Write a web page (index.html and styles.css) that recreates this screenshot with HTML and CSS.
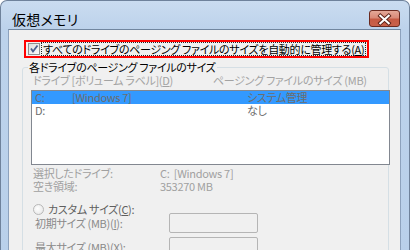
FILE: index.html
```html
<!DOCTYPE html>
<html lang="ja">
<head>
<meta charset="utf-8">
<title>仮想メモリ</title>
<link rel="stylesheet" href="styles.css">
</head>
<body>
<div class="window">
  <div class="titlebar">
    <span class="title">仮想メモリ</span>
    <span class="close">
      <svg width="31" height="17" viewBox="0 0 31 17">
        <path d="M11 4.5 L20 12.5 M20 4.5 L11 12.5" stroke="#5a2218" stroke-width="4.2" stroke-linecap="square" fill="none"/>
        <path d="M11 4.5 L20 12.5 M20 4.5 L11 12.5" stroke="#ffffff" stroke-width="2.2" stroke-linecap="square" fill="none"/>
      </svg>
    </span>
  </div>
  <div class="client">
    <div class="auto">
      <span class="checkbox">
        <svg width="12" height="12" viewBox="0 0 12 12">
          <path d="M3 5.5 L5 8.5 L9.5 2.5" stroke="#4a5f8f" stroke-width="1.8" fill="none"/>
        </svg>
      </span>
      <span class="auto-label">すべてのドライブのページング ファイルのサイズを自動的に管理する(<u>A</u>)</span>
    </div>
    <fieldset class="group">
      <legend>各ドライブのページング ファイルのサイズ</legend>
      <div class="cols">
        <span>ドライブ [ボリューム ラベル](<u>D</u>)</span>
        <span>ページング ファイルのサイズ (MB)</span>
      </div>
      <div class="listbox">
        <div class="row sel"><span>C:</span><span>[Windows 7]</span><span>システム管理</span></div>
        <div class="row"><span>D:</span><span></span><span>なし</span></div>
      </div>
      <div class="info">
        <span>選択したドライブ:</span><span>C:&nbsp;&nbsp;[Windows 7]</span>
        <span>空き領域:</span><span>353270 MB</span>
      </div>
      <div class="radio-row">
        <span class="radio"></span>
        <span class="radio-label">カスタム サイズ(<u>C</u>):</span>
      </div>
      <div class="size-row">
        <span class="size-label">初期サイズ (MB)(<u>I</u>):</span>
        <span class="textbox"></span>
      </div>
      <div class="size-row second">
        <span class="size-label">最大サイズ (MB)(<u>X</u>):</span>
        <span class="textbox"></span>
      </div>
    </fieldset>
  </div>
</div>
</body>
</html>
```
FILE: styles.css
```css
* { box-sizing: border-box; }

body {
  margin: 0;
  width: 410px;
  height: 250px;
  overflow: hidden;
  background: #ffffff;
  font-family: "Noto Sans CJK JP", "Liberation Sans", sans-serif;
  font-size: 11px;
  letter-spacing: -0.3px;
  font-feature-settings: "palt";
}

.window {
  width: 410px;
  height: 270px;
  border: 1px solid #6f829b;
  border-bottom: none;
  border-radius: 7px 7px 0 0;
  background: linear-gradient(#cadcf0, #bcd2eb 28px, #b9d0ea);
  padding: 0 8px 0 7px;
  display: flex;
  flex-direction: column;
}

.titlebar {
  height: 28px;
  display: flex;
  align-items: flex-start;
}

.title {
  margin: 10px 0 0 4px;
  font-size: 14px;
  line-height: 16px;
  color: #000;
  letter-spacing: 0.3px;
}

.close {
  margin: 9px 1px 0 auto;
  width: 31px;
  height: 17px;
  border: 1px solid #6b2a20;
  border-radius: 3px;
  background: linear-gradient(#e4a898, #d98a78 45%, #c65a43 55%, #c9614a);
  display: flex;
}

.client {
  flex: 1;
  background: #f0f0f0;
  border: 1px solid #8da2bd;
  border-top-color: #71869f;
  padding: 10px 0 0 13px;
}

.auto {
  display: flex;
  align-items: center;
  width: 345px;
  height: 18px;
  margin-left: 2px;
  padding-left: 2px;
  border: 2px solid #ff0000;
}

.checkbox {
  width: 12px;
  height: 12px;
  border: 1px solid #8e8f8f;
  background: linear-gradient(135deg, #dcdcdc, #fbfbfb);
  display: flex;
  align-items: center;
  justify-content: center;
}
.checkbox svg { margin: -1px; }

.auto-label {
  margin-left: 1px;
  padding: 0 1px;
  line-height: 12px;
  border: 1px dotted #222;
  color: #000;
  white-space: nowrap;
}

.group {
  width: 367px;
  margin: 3px 0 0 0;
  padding: 0;
  border: 1px solid #d5dfe5;
  border-radius: 3px;
  min-width: 0;
}

.group legend {
  margin-left: 5px;
  padding: 0 1px;
  line-height: 12px;
  color: #000;
}

.cols {
  display: grid;
  grid-template-columns: 180px auto;
  margin: 1px 0 0 10px;
  line-height: 13px;
  color: #a3a3a3;
  white-space: nowrap;
}

.listbox {
  margin: 3px 0 0 8px;
  width: 359px;
  height: 75px;
  border: 1px solid #828790;
  background: #ffffff;
}

.row {
  display: grid;
  grid-template-columns: 37px 175px auto;
  height: 13px;
  line-height: 13px;
  padding-left: 3px;
  color: #6d6d6d;
  white-space: nowrap;
}
.row.sel { background: #3399ff; }

.info {
  display: grid;
  grid-template-columns: 127px auto;
  margin: 2px 0 0 10px;
  line-height: 13px;
  color: #a0a0a0;
  white-space: nowrap;
}

.radio-row {
  display: flex;
  align-items: center;
  gap: 4px;
  height: 12px;
  margin: 10px 0 0 10px;
}

.radio {
  width: 11px;
  height: 11px;
  border-radius: 50%;
  border: 1px solid #b8b8b8;
  background: radial-gradient(circle at 40% 40%, #ffffff, #e2e2e2);
}

.radio-label {
  line-height: 12px;
  color: #5f5f5f;
  white-space: nowrap;
}

.size-row {
  display: flex;
  align-items: center;
  height: 20px;
  margin: -2px 0 0 12px;
}
.size-row.second { margin-top: 4px; }

.size-label {
  width: 134px;
  line-height: 12px;
  color: #8a8a8a;
  white-space: nowrap;
}

.textbox {
  width: 89px;
  height: 20px;
  border: 1px solid #b5b5b5;
  border-radius: 2px;
  background: #f0f0f0;
}
```
